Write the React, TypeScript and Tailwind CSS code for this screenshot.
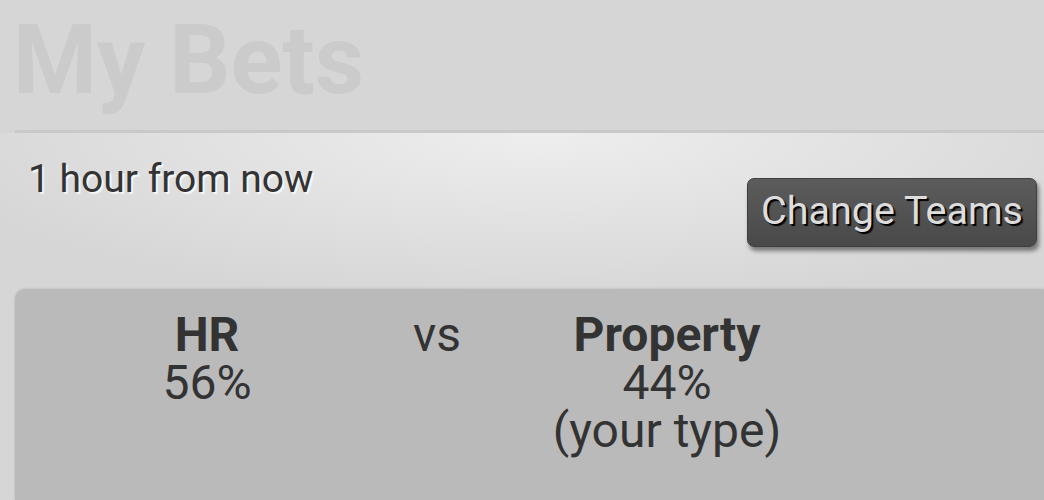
import React from 'react';

interface Side {
  name: string;
  pct: number;
  mine?: boolean;
}

const home: Side = { name: 'HR', pct: 56 };
const away: Side = { name: 'Property', pct: 44, mine: true };

function TeamColumn({ side }: { side: Side }) {
  return (
    <div className="text-center">
      <p className="font-bold">{side.name}</p>
      <p>{side.pct}%</p>
      {side.mine && <p>(your type)</p>}
    </div>
  );
}

export default function App() {
  return (
    <div
      className="w-full h-[500px] overflow-hidden bg-[#d6d6d6] flex flex-col text-[#333333]"
      style={{ fontFamily: 'Roboto, "Noto Sans", sans-serif' }}
    >
      {/* Title */}
      <div className="h-[130px] pl-[13px] pt-[12px]">
        <h1 className="text-[96px] leading-[96px] font-bold text-[#cbcbcb]">My Bets</h1>
      </div>
      <div className="ml-[15px] h-[3px] bg-[#c9c9c9]" />

      {/* Time + action */}
      <div className="h-[156px] flex justify-between pl-[28px] pr-[7px] pt-[22px] bg-[radial-gradient(ellipse_640px_170px_at_52%_0%,#eeeeee,#d6d6d6)]">
        <p className="text-[39px] leading-[48px] [text-shadow:2px_2px_1px_rgba(255,255,255,0.75)]">
          1 hour from now
        </p>
        <button className="mt-[23px] w-[290px] h-[69px] pb-[5px] leading-[64px] text-[39.5px] text-[#dddddd] rounded-[7px] bg-gradient-to-b from-[#5c5c5c] to-[#494949] border border-[#3f3f3f] shadow-[2px_4px_4px_rgba(0,0,0,0.45)] [text-shadow:2px_2px_1px_#000]">
          Change Teams
        </button>
      </div>

      {/* Matchup card */}
      <div className="flex-1 ml-[15px] rounded-tl-[10px] bg-[#bababa] shadow-[0_0_3px_rgba(0,0,0,0.15)] pl-[77px] pt-[22px]">
        <div className="grid grid-cols-[230px_230px_230px] text-[48px] leading-[48px]">
          <TeamColumn side={home} />
          <p className="text-center">vs</p>
          <TeamColumn side={away} />
        </div>
      </div>
    </div>
  );
}
